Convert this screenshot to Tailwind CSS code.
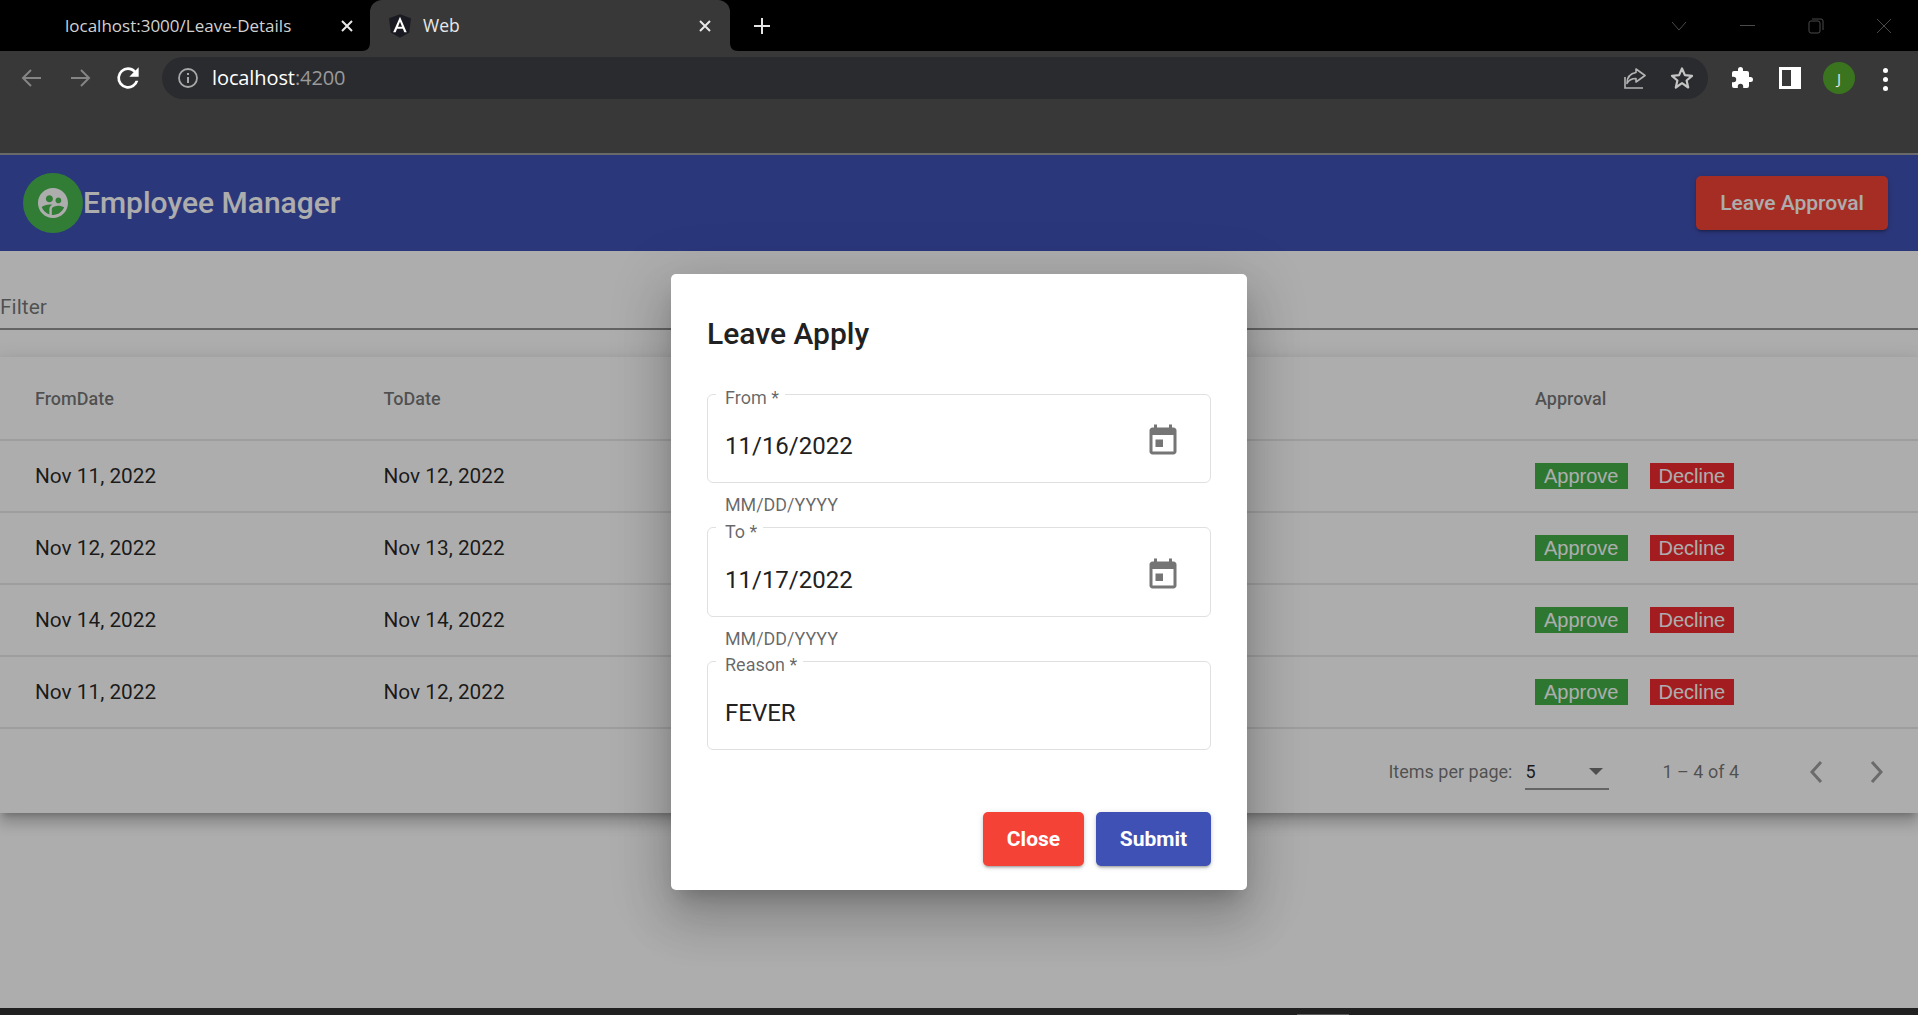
<!DOCTYPE html>
<html lang="en">
<head>
<meta charset="utf-8">
<title>Web</title>
<script src="https://cdn.jsdelivr.net/npm/@tailwindcss/browser@4"></script>
</head>
<body class="m-0 bg-black">
<div class="w-[1918px] h-[1015px] overflow-hidden flex flex-col font-['Roboto',sans-serif]">

  <!-- Tab strip -->
  <div class="h-[51px] bg-black flex items-stretch shrink-0 font-['Open_Sans',sans-serif] text-[17px] relative">
    <div class="w-[370px] flex items-center pl-[65px] pr-[15px] justify-between text-[#d2d2d2]">
      <span>localhost:3000/Leave-Details</span>
      <svg class="w-[16px] h-[16px]" viewBox="0 0 16 16"><path d="M3 3l10 10M13 3L3 13" stroke="#e8e8e8" stroke-width="2"/></svg>
    </div>
    <div class="w-[360px] bg-[#383838] rounded-t-[12px] flex items-center pl-[18px] pr-[17px] relative text-[#e8e8e8]">
      <svg class="absolute -left-[8px] bottom-0 w-[8px] h-[8px]" viewBox="0 0 8 8"><path d="M0 8C5 8 8 5 8 0V8Z" fill="#383838"/></svg>
      <svg class="absolute -right-[8px] bottom-0 w-[8px] h-[8px]" viewBox="0 0 8 8"><path d="M8 8C3 8 0 5 0 0V8Z" fill="#383838"/></svg>
      <svg class="w-[24px] h-[24px] mr-[11px]" viewBox="30 28 190 204"><path d="M125 30L31.900 63.200l14.200 123.100L125 230l78.900-43.700 14.200-123.100z" fill="#1a1a22"/><path d="M125 52.100L66.800 182.600h21.700l11.700-29.200h49.400l11.700 29.200H182L125 52.100zm17 83.300h-34l17-40.900 17 40.900z" fill="#fff"/></svg>
      <span class="flex-1 text-[17.500px]">Web</span>
      <svg class="w-[16px] h-[16px]" viewBox="0 0 16 16"><path d="M3 3l10 10M13 3L3 13" stroke="#e8e8e8" stroke-width="2"/></svg>
    </div>
    <div class="w-[64px] flex items-center justify-center">
      <svg class="w-[18px] h-[18px]" viewBox="0 0 18 18"><path d="M9 1v16M1 9h16" stroke="#e4e4e4" stroke-width="2"/></svg>
    </div>
    <div class="flex-1 flex items-center justify-end">
      <div class="w-[68px] flex justify-center"><svg class="w-[16px] h-[10px]" viewBox="0 0 16 10"><path d="M1 1l7 8 7-8" fill="none" stroke="#4a4a4a" stroke-width="1"/></svg></div>
      <div class="w-[69px] flex justify-center"><div class="w-[15px] h-px bg-[#4a4a4a]"></div></div>
      <div class="w-[68px] flex justify-center"><svg class="w-[16px] h-[16px]" viewBox="0 0 16 16"><rect x="1" y="3" width="11" height="12" rx="2" fill="none" stroke="#4a4a4a"/><path d="M4 1h9a2 2 0 0 1 2 2v9" fill="none" stroke="#4a4a4a"/></svg></div>
      <div class="w-[68px] flex justify-center"><svg class="w-[16px] h-[16px]" viewBox="0 0 16 16"><path d="M1 1l14 14M15 1L1 15" stroke="#4a4a4a"/></svg></div>
    </div>
  </div>

  <!-- Toolbar -->
  <div class="h-[102px] bg-[#383838] shrink-0 pt-[6px]">
    <div class="flex items-center h-[42px]">
      <div class="w-[162px] flex items-center">
        <div class="w-[64px] flex justify-center"><svg class="w-[22px] h-[22px]" viewBox="0 0 22 22"><path d="M20 11H3M10 3l-8 8 8 8" fill="none" stroke="#858585" stroke-width="2"/></svg></div>
        <div class="w-[32px] flex justify-center"><svg class="w-[22px] h-[22px]" viewBox="0 0 22 22"><path d="M2 11h17M12 3l8 8-8 8" fill="none" stroke="#858585" stroke-width="2"/></svg></div>
        <div class="w-[64px] flex justify-center"><svg class="w-[32px] h-[32px]" viewBox="0 0 24 24"><path d="M17.650 6.350A7.960 7.960 0 0 0 12 4a8 8 0 1 0 7.730 10h-2.080A6 6 0 1 1 12 6c1.660 0 3.140.69 4.220 1.780L13 11h7V4l-2.350 2.350z" fill="#fff"/></svg></div>
      </div>
      <div class="w-[1546px] h-[42px] rounded-full bg-[#2a2b2e] flex items-center pl-[15px] pr-[14px] font-['Open_Sans',sans-serif] text-[20px]">
        <svg class="w-[22px] h-[22px] mr-[13px]" viewBox="0 0 22 22"><circle cx="11" cy="11" r="9" fill="none" stroke="#a8a8a8" stroke-width="1.800"/><path d="M11 10v6M11 6v2" stroke="#a8a8a8" stroke-width="2"/></svg>
        <span class="text-white tracking-[-0.1px]">localhost<span class="text-[#9a9a9a]">:4200</span></span>
        <div class="flex-1"></div>
        <svg class="w-[24px] h-[24px] mr-[24px]" viewBox="0 0 24 24"><path d="M3 11v11h18M3 22" fill="none" stroke="#b4b4b4" stroke-width="1.600"/><path d="M14 3l9 6.500-9 6.500v-3.500c-4 0-7 1-9 5 0-6 3-10 9-11z" fill="none" stroke="#b4b4b4" stroke-width="1.600" stroke-linejoin="round"/></svg>
        <svg class="w-[24px] h-[24px]" viewBox="0 0 24 24"><path d="M12 2.500l2.900 6.600 7.100.7-5.400 4.700 1.600 7L12 17.200 5.800 21.500l1.600-7L2 9.800l7.100-.7z" fill="none" stroke="#c4c4c4" stroke-width="2.200" stroke-linejoin="round"/></svg>
      </div>
      <div class="flex-1 flex items-center relative h-[42px]">
        <svg class="absolute left-[22px] top-[9px] w-[24px] h-[24px]" viewBox="0 0 24 24"><path d="M20.500 11H19V7a2 2 0 0 0-2-2h-4V3.500a2.500 2.500 0 0 0-5 0V5H4a2 2 0 0 0-2 2v3.800h1.500a2.700 2.700 0 0 1 0 5.400H2V20a2 2 0 0 0 2 2h3.800v-1.500a2.700 2.700 0 0 1 5.400 0V22H17a2 2 0 0 0 2-2v-4h1.500a2.500 2.500 0 0 0 0-5z" fill="#fff"/></svg>
        <div class="absolute left-[71px] top-[10px] w-[22px] h-[22px] border-[3px] border-white border-r-[10px]"></div>
        <div class="absolute left-[115px] top-[5px] w-[32px] h-[32px] rounded-full bg-[#3a741f] flex items-center justify-center text-[#e8e8e8] text-[15px] font-['Open_Sans',sans-serif]">J</div>
        <div class="absolute left-[175px] top-[11px] flex flex-col gap-[4px]">
          <div class="w-[5px] h-[5px] rounded-full bg-white"></div>
          <div class="w-[5px] h-[5px] rounded-full bg-white"></div>
          <div class="w-[5px] h-[5px] rounded-full bg-white"></div>
        </div>
      </div>
    </div>
  </div>
  <div class="h-[2px] bg-[#6a6a6a] shrink-0"></div>

  <!-- Application -->
  <div class="relative h-[853px] shrink-0 bg-white overflow-hidden">
    <header class="h-[96px] bg-[#3f51b5] flex items-center justify-between pl-[23px] pr-[30px] text-white">
      <div class="flex items-center">
        <div class="w-[60px] h-[60px] rounded-full bg-[#4ab850] flex items-center justify-center">
          <svg class="w-[36px] h-[36px]" viewBox="0 0 24 24"><path fill="#fff" d="M11.990 2c-5.520 0-10 4.480-10 10s4.480 10 10 10 10-4.480 10-10-4.480-10-10-10zm3.610 6.340c1.070 0 1.930.86 1.930 1.930 0 1.070-.86 1.930-1.930 1.930-1.070 0-1.930-.86-1.930-1.930-.01-1.070.86-1.930 1.930-1.930zm-6-1.580c1.300 0 2.360 1.060 2.360 2.360 0 1.300-1.060 2.360-2.360 2.360s-2.360-1.060-2.360-2.360c0-1.310 1.050-2.360 2.360-2.360zm0 9.130v3.750c-2.400-.75-4.300-2.600-5.140-4.960 1.050-1.120 3.670-1.690 5.140-1.690.53 0 1.200.08 1.900.22-1.640.87-1.900 2.020-1.900 2.680zM11.990 20c-.27 0-.53-.01-.79-.04v-4.070c0-1.420 2.940-2.130 4.400-2.130 1.070 0 2.920.39 3.840 1.150-1.170 2.970-4.060 5.090-7.450 5.090z"/></svg>
        </div>
        <span class="text-[30px] font-medium leading-none">Employee Manager</span>
      </div>
      <button class="w-[192px] h-[54px] pt-[1px] rounded-[5px] bg-[#f44336] text-white text-[21px] font-medium shadow-[0_3px_2px_-2px_rgba(0,0,0,.2),0_2px_3px_0_rgba(0,0,0,.14),0_1px_6px_0_rgba(0,0,0,.12)]">Leave Approval</button>
    </header>

    <div class="h-[79px]">
      <div class="pt-[38px] h-[75px] flex items-center text-[21px] text-black/55">Filter</div>
      <div class="mt-[2px] h-[2px] bg-black/42"></div>
    </div>

    <section class="mt-[27px] bg-white shadow-[0_6px_6px_-4px_rgba(0,0,0,.2),0_10px_13px_1px_rgba(0,0,0,.14),0_4px_18px_2px_rgba(0,0,0,.12)]">
      <div class="h-[84px] flex items-center border-b-2 border-[#e8e8e8] text-[18px] font-medium text-black/55">
        <div class="w-[383.500px] pl-[35px]">FromDate</div>
        <div class="w-[1151.500px]">ToDate</div>
        <div>Approval</div>
      </div>
      <div class="h-[72px] flex items-center border-b-2 border-[#e8e8e8] text-[20.800px] text-black/85">
        <div class="w-[383.500px] pl-[35px] pt-[2px]">Nov 11, 2022</div>
        <div class="w-[1151.500px] pt-[2px]">Nov 12, 2022</div>
        <div class="flex gap-[22px] font-['Liberation_Sans',sans-serif]"><button class="h-[26px] px-[9px] bg-[#43b049] text-white text-[20px] leading-none">Approve</button><button class="h-[26px] px-[9px] bg-[#f02a2e] text-white text-[20px] leading-none">Decline</button></div>
      </div>
      <div class="h-[72px] flex items-center border-b-2 border-[#e8e8e8] text-[20.800px] text-black/85">
        <div class="w-[383.500px] pl-[35px] pt-[2px]">Nov 12, 2022</div>
        <div class="w-[1151.500px] pt-[2px]">Nov 13, 2022</div>
        <div class="flex gap-[22px] font-['Liberation_Sans',sans-serif]"><button class="h-[26px] px-[9px] bg-[#43b049] text-white text-[20px] leading-none">Approve</button><button class="h-[26px] px-[9px] bg-[#f02a2e] text-white text-[20px] leading-none">Decline</button></div>
      </div>
      <div class="h-[72px] flex items-center border-b-2 border-[#e8e8e8] text-[20.800px] text-black/85">
        <div class="w-[383.500px] pl-[35px] pt-[2px]">Nov 14, 2022</div>
        <div class="w-[1151.500px] pt-[2px]">Nov 14, 2022</div>
        <div class="flex gap-[22px] font-['Liberation_Sans',sans-serif]"><button class="h-[26px] px-[9px] bg-[#43b049] text-white text-[20px] leading-none">Approve</button><button class="h-[26px] px-[9px] bg-[#f02a2e] text-white text-[20px] leading-none">Decline</button></div>
      </div>
      <div class="h-[72px] flex items-center border-b-2 border-[#e8e8e8] text-[20.800px] text-black/85">
        <div class="w-[383.500px] pl-[35px] pt-[2px]">Nov 11, 2022</div>
        <div class="w-[1151.500px] pt-[2px]">Nov 12, 2022</div>
        <div class="flex gap-[22px] font-['Liberation_Sans',sans-serif]"><button class="h-[26px] px-[9px] bg-[#43b049] text-white text-[20px] leading-none">Approve</button><button class="h-[26px] px-[9px] bg-[#f02a2e] text-white text-[20px] leading-none">Decline</button></div>
      </div>
      <div class="h-[84px] flex items-center justify-end pr-[31px] text-[18px] text-black/55">
        <span class="mr-[13px] mt-[1px]">Items per page:</span>
        <div class="w-[84px] h-[36px] border-b-2 border-black/42 flex items-center justify-between text-black/85 pr-[6px] mt-[2px] mr-[53px]"><span>5</span><span class="w-0 h-0 border-l-[7px] border-r-[7px] border-t-[7px] border-l-transparent border-r-transparent border-t-black/55"></span></div>
        <span class="mr-[67px]">1 – 4 of 4</span>
        <svg class="w-[20px] h-[28px] mr-[41px] mt-[2px]" viewBox="0 0 20 28"><path d="M15 4L6 14l9 10" fill="none" stroke="#000" stroke-opacity=".38" stroke-width="3"/></svg>
        <svg class="w-[20px] h-[28px] mt-[2px]" viewBox="0 0 20 28"><path d="M5 4l9 10-9 10" fill="none" stroke="#000" stroke-opacity=".38" stroke-width="3"/></svg>
      </div>
    </section>

    <!-- Backdrop -->
    <div class="absolute inset-0 bg-black/32"></div>

    <!-- Dialog -->
    <div class="absolute left-[671px] top-[119px] w-[576px] h-[616px] bg-white rounded-[5px] px-[36px] pt-[40px] text-[#212121] shadow-[0_14px_19px_-9px_rgba(0,0,0,.2),0_30px_48px_4px_rgba(0,0,0,.14),0_11px_58px_10px_rgba(0,0,0,.12)]">
      <h2 class="h-[40px] leading-[40px] text-[30px] font-medium mb-[40px]">Leave Apply</h2>

      <div class="relative h-[89px] border border-[#e0e0e0] rounded-[6px] flex items-center justify-between pl-[17px] pr-[29px]">
        <span class="absolute left-[8px] -top-[7px] px-[9px] pr-[6px] bg-white text-[18px] leading-[20px] text-black/60">From *</span>
        <span class="text-[24px] mt-[15px]">11/16/2022</span>
        <svg class="w-[36px] h-[36px] mt-[4px]" viewBox="0 0 24 24"><path fill="#757575" d="M7 11h5v5H7zM16 1v2H8V1H6v2H5c-1.110 0-1.990.9-1.990 2L3 19c0 1.100.89 2 2 2h14c1.100 0 2-.9 2-2V5c0-1.100-.9-2-2-2h-1V1h-2zm3 18H5V8h14v11z"/></svg>
      </div>
      <div class="h-[44px] flex items-center pl-[18px] text-[17.900px] text-black/60">MM/DD/YYYY</div>

      <div class="relative h-[90px] border border-[#e0e0e0] rounded-[6px] flex items-center justify-between pl-[17px] pr-[29px]">
        <span class="absolute left-[8px] -top-[6px] px-[9px] pr-[6px] bg-white text-[18px] leading-[20px] text-black/60">To *</span>
        <span class="text-[24px] mt-[15px]">11/17/2022</span>
        <svg class="w-[36px] h-[36px] mt-[5px]" viewBox="0 0 24 24"><path fill="#757575" d="M7 11h5v5H7zM16 1v2H8V1H6v2H5c-1.110 0-1.990.9-1.990 2L3 19c0 1.100.89 2 2 2h14c1.100 0 2-.9 2-2V5c0-1.100-.9-2-2-2h-1V1h-2zm3 18H5V8h14v11z"/></svg>
      </div>
      <div class="h-[44px] flex items-center pl-[18px] text-[17.900px] text-black/60">MM/DD/YYYY</div>

      <div class="relative h-[89px] border border-[#e0e0e0] rounded-[6px] flex items-center pl-[17px] pr-[29px]">
        <span class="absolute left-[8px] -top-[7px] px-[9px] pr-[6px] bg-white text-[18px] leading-[20px] text-black/60">Reason *</span>
        <span class="text-[24px] mt-[15px]">FEVER</span>
      </div>

      <div class="mt-[62px] flex justify-end gap-[12px]">
        <button class="w-[101px] h-[54px] pt-[1px] rounded-[5px] bg-[#f44336] text-white text-[21px] font-bold shadow-[0_3px_2px_-2px_rgba(0,0,0,.2),0_2px_3px_0_rgba(0,0,0,.14),0_1px_6px_0_rgba(0,0,0,.12)]">Close</button>
        <button class="w-[115px] h-[54px] pt-[1px] rounded-[5px] bg-[#3f51b5] text-white text-[21px] font-bold shadow-[0_3px_2px_-2px_rgba(0,0,0,.2),0_2px_3px_0_rgba(0,0,0,.14),0_1px_6px_0_rgba(0,0,0,.12)]">Submit</button>
      </div>
    </div>
  </div>

  <!-- Taskbar edge -->
  <div class="h-[7px] bg-[#202020] shrink-0 relative">
    <div class="absolute left-[1297px] bottom-0 w-[52px] h-px bg-[#5a5a5a]"></div>
  </div>
</div>
</body>
</html>
